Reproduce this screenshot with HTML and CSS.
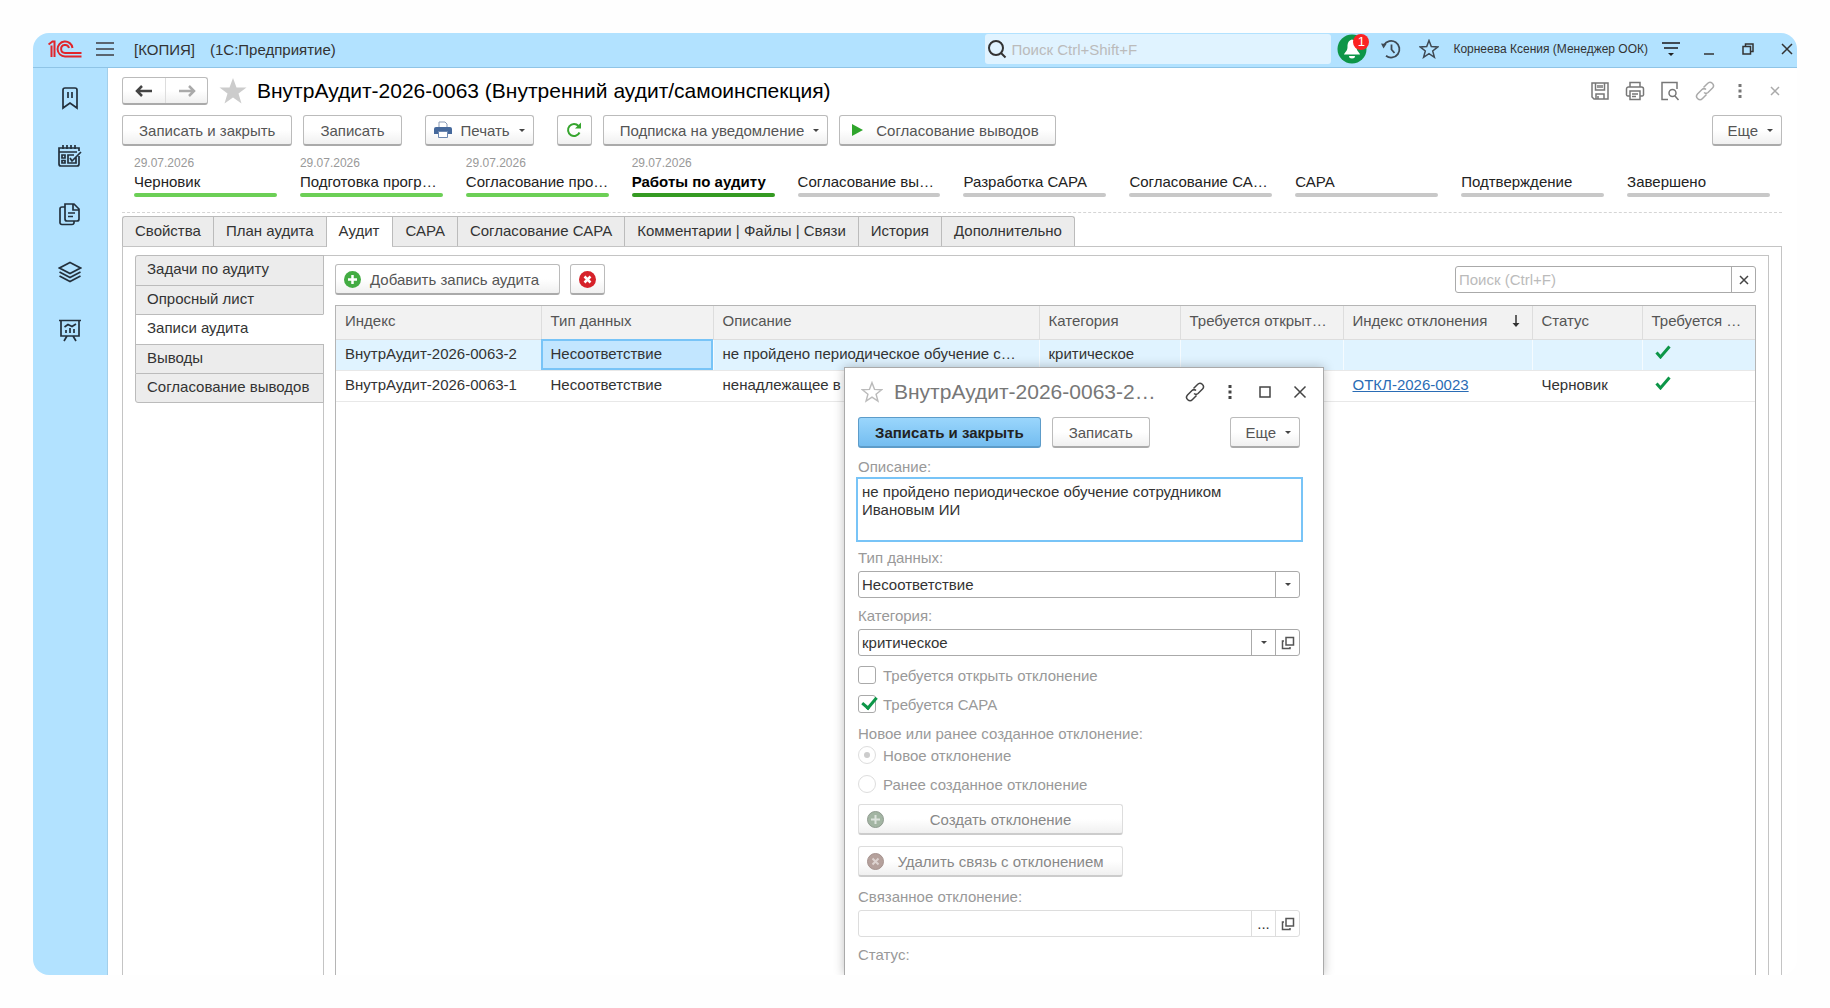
FILE: index.html
```html
<!DOCTYPE html>
<html lang="ru">
<head>
    <meta charset="UTF-8">
    <meta name="viewport" content="width=device-width, initial-scale=1.0">
    <title>1С:Предприятие</title>
    <link rel="stylesheet" href="styles.css">
</head>
<body>
    <div class="window">
        <header class="topbar">
            <svg class="logo" width="34" height="18" viewBox="0 0 34 18" fill="none" stroke="#e1252b" stroke-width="2">
                <path d="M0.500 4.500L4.500 1.500H6.500V17M3.500 5.500V17"/>
                <path d="M24.500 8A7.500 7.500 0 1 0 17 16.500H33.500"/>
                <path d="M21 8A4 4 0 1 0 17 13H33.500"/>
            </svg>
            <button class="icon-btn burger" aria-label="Меню">
                <svg width="18" height="16" viewBox="0 0 18 16" stroke="#5a6570" stroke-width="2"><path d="M0 2H18M0 8H18M0 14H18"/></svg>
            </button>
            <span class="app-mode">[КОПИЯ]</span>
            <span class="app-name">(1С:Предприятие)</span>
            <div class="global-search">
                <svg width="20" height="20" viewBox="0 0 20 20" fill="none" stroke="#333" stroke-width="2"><circle cx="9" cy="9" r="7"/><path d="M14 14L18.500 18.500"/></svg>
                <input type="text" placeholder="Поиск Ctrl+Shift+F" aria-label="Поиск">
            </div>
            <button class="icon-btn bell" aria-label="Уведомления">
                <svg width="30" height="30" viewBox="0 0 30 30"><circle cx="15" cy="15" r="14.500" fill="#0d9648"/><path d="M15 5.500C11 6.500 10.500 10 10.500 13C10.500 17 8 18 7 20.500H23C22 18 19.500 17 19.500 13C19.500 10 19 6.500 15 5.500ZM12 22H18A3 2.500 0 0 1 12 22Z" fill="#fff"/></svg>
                <span class="badge">1</span>
            </button>
            <button class="icon-btn" aria-label="История">
                <svg width="20" height="20" viewBox="0 0 20 20" fill="none" stroke="#3f4a54" stroke-width="1.800"><path d="M3 6A8.300 8.300 0 1 1 5 16.800M10.500 5.500V10.500L13.500 14"/><path d="M0 4.500L5.500 5L2.500 9.500Z" fill="#3f4a54" stroke="none"/></svg>
            </button>
            <button class="icon-btn" aria-label="Избранное">
                <svg width="20" height="20" viewBox="0 0 20 20" fill="none" stroke="#3f4a54" stroke-width="1.500"><path d="M10 1.500L12.300 7.600L18.800 7.900L13.700 12L15.400 18.300L10 14.700L4.600 18.300L6.300 12L1.200 7.900L7.700 7.600Z"/></svg>
            </button>
            <span class="user">Корнеева Ксения (Менеджер ООК)</span>
            <button class="icon-btn" aria-label="Настройки">
                <svg width="18" height="16" viewBox="0 0 18 16" stroke="#3f4a54" stroke-width="2"><path d="M0 2H18M2 7H16"/><path d="M6 12H12L9 15Z" fill="#222" stroke="none"/></svg>
            </button>
            <div class="window-controls">
                <button class="icon-btn" aria-label="Свернуть"><svg width="12" height="12" viewBox="0 0 12 12" stroke="#333" stroke-width="1.500"><path d="M1 11H11"/></svg></button>
                <button class="icon-btn" aria-label="Развернуть"><svg width="12" height="12" viewBox="0 0 12 12" fill="none" stroke="#333" stroke-width="1.500"><path d="M1 3.500H8.500V11H1ZM3.500 3V1H11V8.500H9"/></svg></button>
                <button class="icon-btn" aria-label="Закрыть"><svg width="12" height="12" viewBox="0 0 12 12" stroke="#333" stroke-width="1.500"><path d="M1 1L11 11M11 1L1 11"/></svg></button>
            </div>
        </header>

        <div class="body">
            <nav class="sidebar">
                <a href="#" aria-label="Закладки"><svg width="24" height="24" viewBox="0 0 24 24"><path d="M5 22V4A2 2 0 0 1 7 2H17A2 2 0 0 1 19 4V22L12 17ZM10 6V12M14 6V12"/></svg></a>
                <a href="#" aria-label="Задачи"><svg width="24" height="24" viewBox="0 0 24 24"><path d="M21 12V20A2 2 0 0 1 19 22H3A2 2 0 0 1 1 20V4H21V7M1 8H19M5 1V5M9 1V5M13 1V5M17 1V5M4 11H7V14H4ZM4 16.500H7V19H4ZM18 13V19H10V11H16M12 14L14 17L23 8"/></svg></a>
                <a href="#" aria-label="Документы"><svg width="24" height="24" viewBox="0 0 24 24"><path d="M7 2H16L21 7V17A2 2 0 0 1 19 19H9A2 2 0 0 1 7 17ZM15 2V8H21M7 5H4A2 2 0 0 0 2 7V20A2 2 0 0 0 4 22.500H14A2 2 0 0 0 16 21V19M10 11H17M10 14.500H15"/></svg></a>
                <a href="#" aria-label="Справочники"><svg width="24" height="24" viewBox="0 0 24 24"><path d="M12 2.500L22.500 8L12 13.500L1.500 8ZM1.500 12L12 17.500L22.500 12M1.500 16L12 21.500L22.500 16"/></svg></a>
                <a href="#" aria-label="Отчеты"><svg width="24" height="24" viewBox="0 0 24 24"><path d="M1 2.500H23M3 3V18H21V3M9 18L6 23M15 18L18 23M8 15V12M12 15V10M16 15V11M6.500 9L10 6.500L14 8.500L18 6"/></svg></a>
            </nav>

            <main class="content">
                <div class="title-row">
                    <div class="nav-buttons">
                        <button aria-label="Назад"><svg width="18" height="12" viewBox="0 0 18 12" fill="none" stroke="#444" stroke-width="2.500"><path d="M17 6H3M7 1L2 6L7 11"/></svg></button>
                        <button aria-label="Вперед"><svg width="18" height="12" viewBox="0 0 18 12" fill="none" stroke="#aaa" stroke-width="2.500"><path d="M1 6H15M11 1L16 6L11 11"/></svg></button>
                    </div>
                    <svg class="fav" width="28" height="26" viewBox="0 0 28 26"><path d="M14 0L17.500 9.500H27.500L19.500 15.500L22.500 25.500L14 19.500L5.500 25.500L8.500 15.500L0.500 9.500H10.500Z" fill="#ccc"/></svg>
                    <h1>ВнутрАудит-2026-0063 (Внутренний аудит/самоинспекция)</h1>
                    <div class="doc-icons">
                        <button class="icon-btn" aria-label="Сохранить"><svg width="20" height="20" viewBox="0 0 20 20"><path d="M2 2H18V18H4L2 16ZM5.500 2V9H14.500V2M8 4V7M10 4V7M12 4V7M6 18V13H14V18M8 15V18"/></svg></button>
                        <button class="icon-btn" aria-label="Печать"><svg width="20" height="20" viewBox="0 0 20 20"><path d="M5 6V1.500H15V6M5 15H3A1.500 1.500 0 0 1 1.500 13V8A2 2 0 0 1 3.500 6H16.500A2 2 0 0 1 18.500 8V13A1.500 1.500 0 0 1 17 15H15M5 10H15V18.500H5ZM7 13H13M7 15.500H11"/></svg></button>
                        <button class="icon-btn" aria-label="Просмотр"><svg width="20" height="20" viewBox="0 0 20 20"><path d="M8 18.500H2V1.500H17V8"/><circle cx="12.500" cy="12" r="3.500"/><path d="M15 15L18.500 19"/></svg></button>
                        <button class="icon-btn light" aria-label="Ссылка"><svg width="20" height="20" viewBox="0 0 20 20"><path d="M8.500 6.500L12.500 2.500A3 3 0 0 1 17.500 7L13 11.500A3 3 0 0 1 9 11.500M11.500 13.500L7.500 17.500A3 3 0 0 1 2.500 13L7 8.500A3 3 0 0 1 11 8.500"/></svg></button>
                        <button class="icon-btn" aria-label="Действия"><svg width="20" height="20" viewBox="0 0 20 20"><path d="M10 3V6M10 8.500V11.500M10 14V17" stroke-width="3"/></svg></button>
                        <button class="icon-btn light" aria-label="Закрыть"><svg width="20" height="20" viewBox="0 0 20 20"><path d="M6 6L14 14M14 6L6 14"/></svg></button>
                    </div>
                </div>

                <div class="toolbar">
                    <button class="btn">Записать и закрыть</button>
                    <button class="btn">Записать</button>
                    <button class="btn print">
                        <svg width="18" height="18" viewBox="0 0 18 18"><path d="M5 6V1H11L13 3V6" fill="#fff" stroke="#8a9bb5"/><path d="M2 6H16A2 2 0 0 1 18 8V13H0V8A2 2 0 0 1 2 6Z" fill="#46699c"/><path d="M4.500 10.500H13.500V16.500H4.500Z" fill="#fff" stroke="#6d88b0"/></svg>
                        Печать <i class="caret"></i>
                    </button>
                    <button class="btn square refresh" aria-label="Обновить">
                        <svg width="16" height="16" viewBox="0 0 16 16" fill="none" stroke="#36a52e" stroke-width="2"><path d="M13.500 10.500A6 6 0 1 1 12.500 4"/><path d="M15 0.500V6.500H9Z" fill="#36a52e" stroke="none"/></svg>
                    </button>
                    <button class="btn subscribe">Подписка на уведомление <i class="caret"></i></button>
                    <button class="btn approve">
                        <svg width="11" height="12" viewBox="0 0 11 12"><path d="M0 0L11 6L0 12Z" fill="#2fa52c"/></svg>
                        Согласование выводов
                    </button>
                    <button class="btn more">Еще <i class="caret"></i></button>
                </div>

                <ol class="steps">
                    <li class="done"><time>29.07.2026</time><span>Черновик</span></li>
                    <li class="done"><time>29.07.2026</time><span>Подготовка прогр…</span></li>
                    <li class="done"><time>29.07.2026</time><span>Согласование про…</span></li>
                    <li class="current"><time>29.07.2026</time><span>Работы по аудиту</span></li>
                    <li><time></time><span>Согласование вы…</span></li>
                    <li><time></time><span>Разработка САРА</span></li>
                    <li><time></time><span>Согласование СА…</span></li>
                    <li><time></time><span>САРА</span></li>
                    <li><time></time><span>Подтверждение</span></li>
                    <li><time></time><span>Завершено</span></li>
                </ol>

                <div class="tabs">
                    <button>Свойства</button>
                    <button>План аудита</button>
                    <button class="active">Аудит</button>
                    <button>САРА</button>
                    <button>Согласование САРА</button>
                    <button>Комментарии | Файлы | Связи</button>
                    <button>История</button>
                    <button>Дополнительно</button>
                </div>

                <div class="tab-page">
                    <div class="side-tabs">
                        <button>Задачи по аудиту</button>
                        <button>Опросный лист</button>
                        <button class="active">Записи аудита</button>
                        <button>Выводы</button>
                        <button>Согласование выводов</button>
                    </div>
                    <section class="records">
                        <div class="records-bar">
                            <button class="btn add">
                                <svg width="17" height="17" viewBox="0 0 17 17"><circle cx="8.500" cy="8.500" r="8.500" fill="#43ac43"/><path d="M8.500 4V13M4 8.500H13" stroke="#fff" stroke-width="2.500"/></svg>
                                Добавить запись аудита
                            </button>
                            <button class="btn square" aria-label="Удалить">
                                <svg width="17" height="17" viewBox="0 0 17 17"><circle cx="8.500" cy="8.500" r="8.500" fill="#d6222a"/><path d="M5.500 5.500L11.500 11.500M11.500 5.500L5.500 11.500" stroke="#fff" stroke-width="2.500"/></svg>
                            </button>
                            <div class="field search">
                                <input type="text" placeholder="Поиск (Ctrl+F)" aria-label="Поиск по списку">
                                <button aria-label="Очистить"><svg width="10" height="10" viewBox="0 0 10 10" stroke="#444" stroke-width="1.500"><path d="M1 1L9 9M9 1L1 9"/></svg></button>
                            </div>
                        </div>
                        <div class="table-wrap">
                            <table>
                                <colgroup>
                                    <col class="c-index"><col class="c-type"><col class="c-desc"><col class="c-cat"><col class="c-open"><col class="c-dev"><col class="c-status"><col class="c-capa">
                                </colgroup>
                                <thead>
                                    <tr>
                                        <th>Индекс</th>
                                        <th>Тип данных</th>
                                        <th>Описание</th>
                                        <th>Категория</th>
                                        <th>Требуется открыт…</th>
                                        <th><div class="sorted">Индекс отклонения <svg width="8" height="12" viewBox="0 0 8 12"><path d="M4 0V9" stroke="#333" stroke-width="1.500"/><path d="M0.500 8H7.500L4 12Z" fill="#333"/></svg></div></th>
                                        <th>Статус</th>
                                        <th>Требуется …</th>
                                    </tr>
                                </thead>
                                <tbody>
                                    <tr class="selected">
                                        <td>ВнутрАудит-2026-0063-2</td>
                                        <td class="focused">Несоответствие</td>
                                        <td>не пройдено периодическое обучение с…</td>
                                        <td>критическое</td>
                                        <td></td>
                                        <td></td>
                                        <td></td>
                                        <td><svg class="tick" width="16" height="14" viewBox="0 0 16 14"><path d="M1.500 7.500L5.500 12L14.500 1.500"/></svg></td>
                                    </tr>
                                    <tr>
                                        <td>ВнутрАудит-2026-0063-1</td>
                                        <td>Несоответствие</td>
                                        <td>ненадлежащее в</td>
                                        <td></td>
                                        <td></td>
                                        <td><a href="#">ОТКЛ-2026-0023</a></td>
                                        <td>Черновик</td>
                                        <td><svg class="tick" width="16" height="14" viewBox="0 0 16 14"><path d="M1.500 7.500L5.500 12L14.500 1.500"/></svg></td>
                                    </tr>
                                </tbody>
                            </table>
                        </div>
                    </section>
                </div>
            </main>
        </div>

        <!-- Карточка записи аудита -->
        <div class="dialog" role="dialog" aria-labelledby="dialogTitle">
            <div class="dialog-head">
                <svg class="star" width="22" height="22" viewBox="0 0 20 20" fill="none" stroke="#bbb" stroke-width="1.300"><path d="M10 1.500L12.300 7.600L18.800 7.900L13.700 12L15.400 18.300L10 14.700L4.600 18.300L6.300 12L1.200 7.900L7.700 7.600Z"/></svg>
                <h2 id="dialogTitle">ВнутрАудит-2026-0063-2…</h2>
                <button class="icon-btn" aria-label="Ссылка"><svg width="20" height="20" viewBox="0 0 20 20"><path d="M8.500 6.500L12.500 2.500A3 3 0 0 1 17.500 7L13 11.500A3 3 0 0 1 9 11.500M11.500 13.500L7.500 17.500A3 3 0 0 1 2.500 13L7 8.500A3 3 0 0 1 11 8.500"/></svg></button>
                <button class="icon-btn" aria-label="Действия"><svg width="20" height="20" viewBox="0 0 20 20"><path d="M10 3V6M10 8.500V11.500M10 14V17" stroke-width="3"/></svg></button>
                <button class="icon-btn" aria-label="Развернуть"><svg width="20" height="20" viewBox="0 0 20 20"><path d="M5 5H15V15H5Z"/></svg></button>
                <button class="icon-btn" aria-label="Закрыть"><svg width="20" height="20" viewBox="0 0 20 20"><path d="M4.500 4.500L15.500 15.500M15.500 4.500L4.500 15.500"/></svg></button>
            </div>
            <div class="dialog-bar">
                <button class="btn primary">Записать и закрыть</button>
                <button class="btn">Записать</button>
                <button class="btn more">Еще <i class="caret"></i></button>
            </div>

            <label class="caption" for="desc">Описание:</label>
            <textarea id="desc">не пройдено периодическое обучение сотрудником Ивановым ИИ</textarea>

            <label class="caption" for="type">Тип данных:</label>
            <div class="field">
                <select id="type"><option>Несоответствие</option></select>
                <span class="arrow"><i class="caret"></i></span>
            </div>

            <label class="caption" for="category">Категория:</label>
            <div class="field">
                <select id="category"><option>критическое</option></select>
                <span class="arrow"><i class="caret"></i></span>
                <button aria-label="Открыть"><svg class="open" width="14" height="14" viewBox="0 0 14 14"><path d="M5 1.500H12.500V9H5ZM3 5H1.500V12.500H9V11"/></svg></button>
            </div>

            <label class="check"><input type="checkbox">Требуется открыть отклонение</label>
            <label class="check"><input type="checkbox" checked>Требуется САРА</label>

            <fieldset>
                <legend>Новое или ранее созданное отклонение:</legend>
                <label class="check"><input type="radio" name="dev" disabled checked>Новое отклонение</label>
                <label class="check"><input type="radio" name="dev" disabled>Ранее созданное отклонение</label>
            </fieldset>

            <div class="actions">
                <button class="btn" disabled>
                    <svg width="17" height="17" viewBox="0 0 17 17"><circle cx="8.500" cy="8.500" r="8" fill="#a3b5a3" stroke="#8f9a8f"/><path d="M8.500 4V13M4 8.500H13" stroke="#dde3dd" stroke-width="2"/></svg>
                    <span>Создать отклонение</span>
                </button>
                <button class="btn" disabled>
                    <svg width="17" height="17" viewBox="0 0 17 17"><circle cx="8.500" cy="8.500" r="8" fill="#b5a19c" stroke="#a5928e"/><path d="M5.500 5.500L11.500 11.500M11.500 5.500L5.500 11.500" stroke="#ddd3d0" stroke-width="2"/></svg>
                    <span>Удалить связь с отклонением</span>
                </button>
            </div>

            <label class="caption" for="linked">Связанное отклонение:</label>
            <div class="field off">
                <input type="text" id="linked" disabled>
                <button aria-label="Выбрать">...</button>
                <button aria-label="Открыть"><svg class="open" width="14" height="14" viewBox="0 0 14 14"><path d="M5 1.500H12.500V9H5ZM3 5H1.500V12.500H9V11"/></svg></button>
            </div>
            <span class="caption">Статус:</span>
        </div>
    </div>
</body>
</html>
```
FILE: styles.css
```css
* {
    box-sizing: border-box;
}
body {
    margin: 0;
    padding: 33px;
    height: 100vh;
    background-color: #fefefe;
    color: #333;
    font-family: "Liberation Sans", Arial, sans-serif;
    font-size: 15px;
}
button, input, select, textarea {
    font: inherit;
    color: inherit;
}
button {
    padding: 0;
    cursor: pointer;
}
a {
    color: #2a6cb5;
}
.window {
    position: relative;
    display: flex;
    flex-direction: column;
    height: calc(100vh - 66px);
    border-radius: 16px;
    overflow: hidden;
}
.icon-btn {
    display: flex;
    align-items: center;
    justify-content: center;
    border: none;
    background: none;
}

/* top bar */
.topbar {
    display: flex;
    align-items: center;
    flex: none;
    height: 35px;
    padding: 0 4px 2px 15px;
    background: #b2e2ff;
    border-bottom: 1px solid #8fc4e6;
}
.burger {
    margin: 0 20px 0 14px;
}
.app-mode {
    margin-right: 15px;
}
.global-search {
    display: flex;
    align-items: center;
    gap: 2px;
    width: 346px;
    height: 30px;
    margin-left: auto;
    padding-left: 2px;
    background: #e0f3ff;
    border-radius: 3px;
}
.global-search input {
    flex: 1;
    min-width: 0;
    border: none;
    background: none;
    outline: none;
}
input::placeholder {
    color: #bbb;
    opacity: 1;
}
.bell {
    position: relative;
    margin: 0 14px 0 6px;
}
.badge {
    position: absolute;
    top: 0;
    right: -2px;
    width: 16px;
    height: 16px;
    border-radius: 8px;
    background: #fb2222;
    color: #fff;
    font-size: 13px;
    line-height: 16px;
}
.bell + .icon-btn {
    margin-right: 18px;
}
.user {
    margin: 0 14px;
    font-size: 12px;
}
.window-controls {
    display: flex;
    gap: 27px;
    margin-left: 23px;
}

.body {
    display: flex;
    flex: 1;
    min-height: 0;
}
.sidebar {
    display: flex;
    flex-direction: column;
    align-items: center;
    gap: 34px;
    flex: none;
    width: 75px;
    padding-top: 18px;
    background: #b2e2ff;
    border-right: 1px solid #a3cfea;
}
.sidebar a {
    height: 24px;
}
.sidebar svg {
    fill: none;
    stroke: #23303c;
    stroke-width: 1.7;
}

/* document form */
.content {
    display: flex;
    flex-direction: column;
    flex: 1;
    min-width: 0;
    padding: 9px 15px 0 14px;
    background: #fff;
}
.title-row {
    display: flex;
    align-items: center;
    height: 28px;
}
.nav-buttons {
    display: flex;
    border: 1px solid #bbb;
    border-bottom: 2px solid #aaa;
    border-radius: 3px;
    background: linear-gradient(#fff 50%, #f0f0f0);
}
.nav-buttons button {
    display: flex;
    align-items: center;
    justify-content: center;
    width: 42px;
    height: 25px;
    border: none;
    background: none;
}
.nav-buttons button + button {
    border-left: 1px solid #ddd;
}
.fav {
    margin: 0 10px 0 11px;
}
h1 {
    margin: 0;
    color: #000;
    font-size: 21px;
    font-weight: normal;
}
.doc-icons {
    display: flex;
    gap: 15px;
    margin-right: -3px;
    margin-left: auto;
}
.doc-icons svg,
.dialog-head .icon-btn svg {
    fill: none;
    stroke: #777;
    stroke-width: 1.5;
}
.doc-icons .light svg {
    stroke: #aaa;
}
.btn {
    display: flex;
    align-items: center;
    justify-content: center;
    gap: 9px;
    height: 31px;
    padding: 0 16px;
    border: 1px solid #bbb;
    border-bottom: 2px solid #aaa;
    border-radius: 3px;
    background: linear-gradient(#fff 50%, #f0f0f0);
    color: #555;
    white-space: nowrap;
}
.square {
    width: 35px;
    padding: 0;
}
.caret {
    border: 3px solid transparent;
    border-top-color: #444;
    border-bottom: none;
}
.toolbar {
    display: flex;
    gap: 11px;
    margin-top: 10px;
}
.print {
    margin-left: 12px;
    padding: 0 8px;
}
.refresh {
    margin-left: 12px;
}
.subscribe {
    padding-right: 8px;
}
.approve {
    padding-left: 12px;
    gap: 13px;
}
.more {
    margin-left: auto;
    padding: 0 8px 0 14px;
}

.steps {
    display: grid;
    grid-template-columns: repeat(10, 1fr);
    column-gap: 23px;
    margin: 0;
    padding: 11px 12px 15px 12px;
    list-style: none;
    border-bottom: 1px dashed #d5d5d5;
}
.steps li {
    display: flex;
    flex-direction: column;
    min-width: 0;
    color: #222;
    white-space: nowrap;
}
.steps time {
    height: 13px;
    color: #999;
    font-size: 12px;
    line-height: 13px;
}
.steps span {
    height: 23px;
    line-height: 23px;
}
.steps li::after {
    content: "";
    height: 4px;
    border-radius: 2px;
    background: #c8c8c8;
}
.steps .done::after {
    background: #6ccf56;
}
.steps .current {
    color: #000;
    font-weight: bold;
}
.steps .current time {
    font-weight: normal;
}
.steps .current::after {
    background: #359a22;
}

.tabs {
    display: flex;
    margin-top: 3px;
}
.tabs button {
    height: 30px;
    padding: 0 12px 2px 12px;
    border: 1px solid #bbb;
    border-right: none;
    border-bottom: none;
    background: #ececec;
}
.tabs button:first-child {
    border-top-left-radius: 3px;
}
.tabs button:last-child {
    border-right: 1px solid #bbb;
    border-top-right-radius: 3px;
}
.tabs .active,
.side-tabs .active {
    background: #fff;
}
.tabs .active {
    height: 31px;
    margin-bottom: -1px;
    padding: 0 13px 3px 12px;
    z-index: 1;
}
.tab-page {
    display: flex;
    align-items: stretch;
    flex: 1;
    padding: 8px 12px 0 12px;
    border: 1px solid #c4c4c4;
    border-bottom: none;
}
.side-tabs {
    display: grid;
    grid-template-rows: repeat(5, 1fr);
    width: 189px;
    height: 148px;
    margin-right: -1px;
    z-index: 1;
}
.side-tabs button {
    padding: 0 11px 3px 11px;
    border: 1px solid #bbb;
    border-bottom: none;
    background: #ececec;
    text-align: left;
    white-space: nowrap;
}
.side-tabs .active {
    border-right-color: #fff;
}
.side-tabs button:first-child {
    border-top-left-radius: 3px;
}
.side-tabs button:last-child {
    border-bottom: 1px solid #bbb;
    border-bottom-left-radius: 3px;
}
.records {
    display: flex;
    flex-direction: column;
    flex: 1;
    min-width: 0;
    padding: 8px 12px 0 11px;
    border: 1px solid #c4c4c4;
    border-bottom: none;
}
.records-bar {
    display: flex;
    align-items: center;
    gap: 10px;
}
.add {
    padding: 0 20px 0 8px;
}
.field {
    display: flex;
    height: 27px;
    border: 1px solid #aaa;
    border-radius: 3px;
    background: #fff;
}
.field input,
.field select {
    flex: 1;
    min-width: 0;
    padding: 0 3px 1px 3px;
    border: none;
    outline: none;
    background: none;
    appearance: none;
}
.field button,
.field .arrow {
    display: flex;
    align-items: center;
    justify-content: center;
    width: 24px;
    border: none;
    border-left: 1px solid #aaa;
    background: none;
}
.search {
    width: 301px;
    margin-left: auto;
}

.table-wrap {
    flex: 1;
    margin-top: 10px;
    border: 1px solid #b5b5b5;
    border-bottom: none;
}
table {
    width: 100%;
    border-collapse: collapse;
    table-layout: fixed;
}
.c-index { width: 205px; }
.c-type { width: 172px; }
.c-cat { width: 141px; }
.c-open { width: 163px; }
.c-dev { width: 189px; }
.c-status { width: 110px; }
.c-capa { width: 113px; }
th, td {
    overflow: hidden;
    padding: 0 12px 3px 9px;
    border-right: 1px solid #ddd;
    text-align: left;
    text-overflow: ellipsis;
    white-space: nowrap;
}
th:last-child, td:last-child {
    padding-right: 4px;
    border-right: none;
}
th {
    height: 33px;
    background: #f2f2f2;
    border-bottom: 1px solid #ddd;
    color: #555;
    font-weight: normal;
}
td {
    height: 31px;
    border-right-color: transparent;
    border-bottom: 1px solid #e8e8e8;
}
.selected td {
    background: #e0f3ff;
    border-right-color: #f5fbff;
}
.selected .focused {
    background: #c2e6ff;
    outline: 2px solid #78c4f7;
    outline-offset: -2px;
}
.sorted {
    display: flex;
    align-items: center;
    justify-content: space-between;
}
.tick {
    margin-left: 3px;
    fill: none;
    stroke: #0d9648;
    stroke-width: 3;
}

/* dialog */
.dialog {
    position: absolute;
    top: 334px;
    right: 473px;
    bottom: 0;
    width: 480px;
    overflow: hidden;
    padding: 10px 23px 0 13px;
    border: 1px solid #aaa;
    border-bottom: none;
    background: #fff;
    box-shadow: 0 0 10px rgba(0, 0, 0, 0.25);
}
.dialog-head {
    display: flex;
    align-items: center;
    gap: 15px;
    height: 28px;
    margin-right: -10px;
}
.star {
    margin-left: 3px;
}
.dialog-head h2 {
    flex: 1;
    margin: 0 0 0 -4px;
    color: #777;
    font-size: 21px;
    font-weight: normal;
    white-space: nowrap;
}
.dialog-head .icon-btn svg {
    stroke: #444;
}
.dialog-bar {
    display: flex;
    gap: 11px;
    margin-top: 11px;
    margin-bottom: 11px;
}
.primary {
    border-color: #5d9cc9;
    background: linear-gradient(#9ad6fc, #74bdf0);
    color: #222;
    font-weight: bold;
}
.caption {
    display: block;
    height: 18px;
    color: #999;
    line-height: 16px;
}
textarea {
    display: block;
    width: calc(100% + 5px);
    height: 65px;
    margin: 0 -3px 8px -2px;
    padding: 4px;
    border: 2px solid #78c4f7;
    outline: none;
    line-height: 18px;
    resize: none;
}
.dialog .field {
    margin: 3px 0 10px;
}
.check {
    display: flex;
    align-items: center;
    gap: 7px;
    height: 18px;
    margin-bottom: 11px;
    color: #999;
}
.check input {
    appearance: none;
    flex: none;
    width: 18px;
    height: 18px;
    margin: 0;
    border: 1px solid #aaa;
    border-radius: 3px;
    background: #fff;
}
.check input[type="checkbox"]:checked::before {
    content: "";
    display: block;
    width: 6px;
    height: 12px;
    margin: -2px 0 0 6px;
    border: solid #0d9648;
    border-width: 0 3px 3px 0;
    transform: rotate(40deg);
}
.check input[type="radio"] {
    border-color: #ddd;
    border-radius: 50%;
}
.check input[type="radio"]:checked::before {
    content: "";
    display: block;
    width: 6px;
    height: 6px;
    margin: 5px;
    border-radius: 50%;
    background: #ccc;
}
fieldset {
    margin: 0;
    padding: 0;
    border: none;
}
legend {
    height: 22px;
    padding: 0;
    color: #999;
    line-height: 19px;
}
.actions {
    display: flex;
    flex-direction: column;
    gap: 11px;
    width: 265px;
    margin-bottom: 12px;
}
.actions .btn {
    padding: 0 14px 0 8px;
    border-color: #ddd;
    border-bottom-color: #ccc;
    color: #888;
}
.actions span {
    flex: 1;
}
.field.off,
.field.off button {
    border-color: #ddd;
}
.open {
    fill: none;
    stroke: #555;
    stroke-width: 1.5;
}
```
